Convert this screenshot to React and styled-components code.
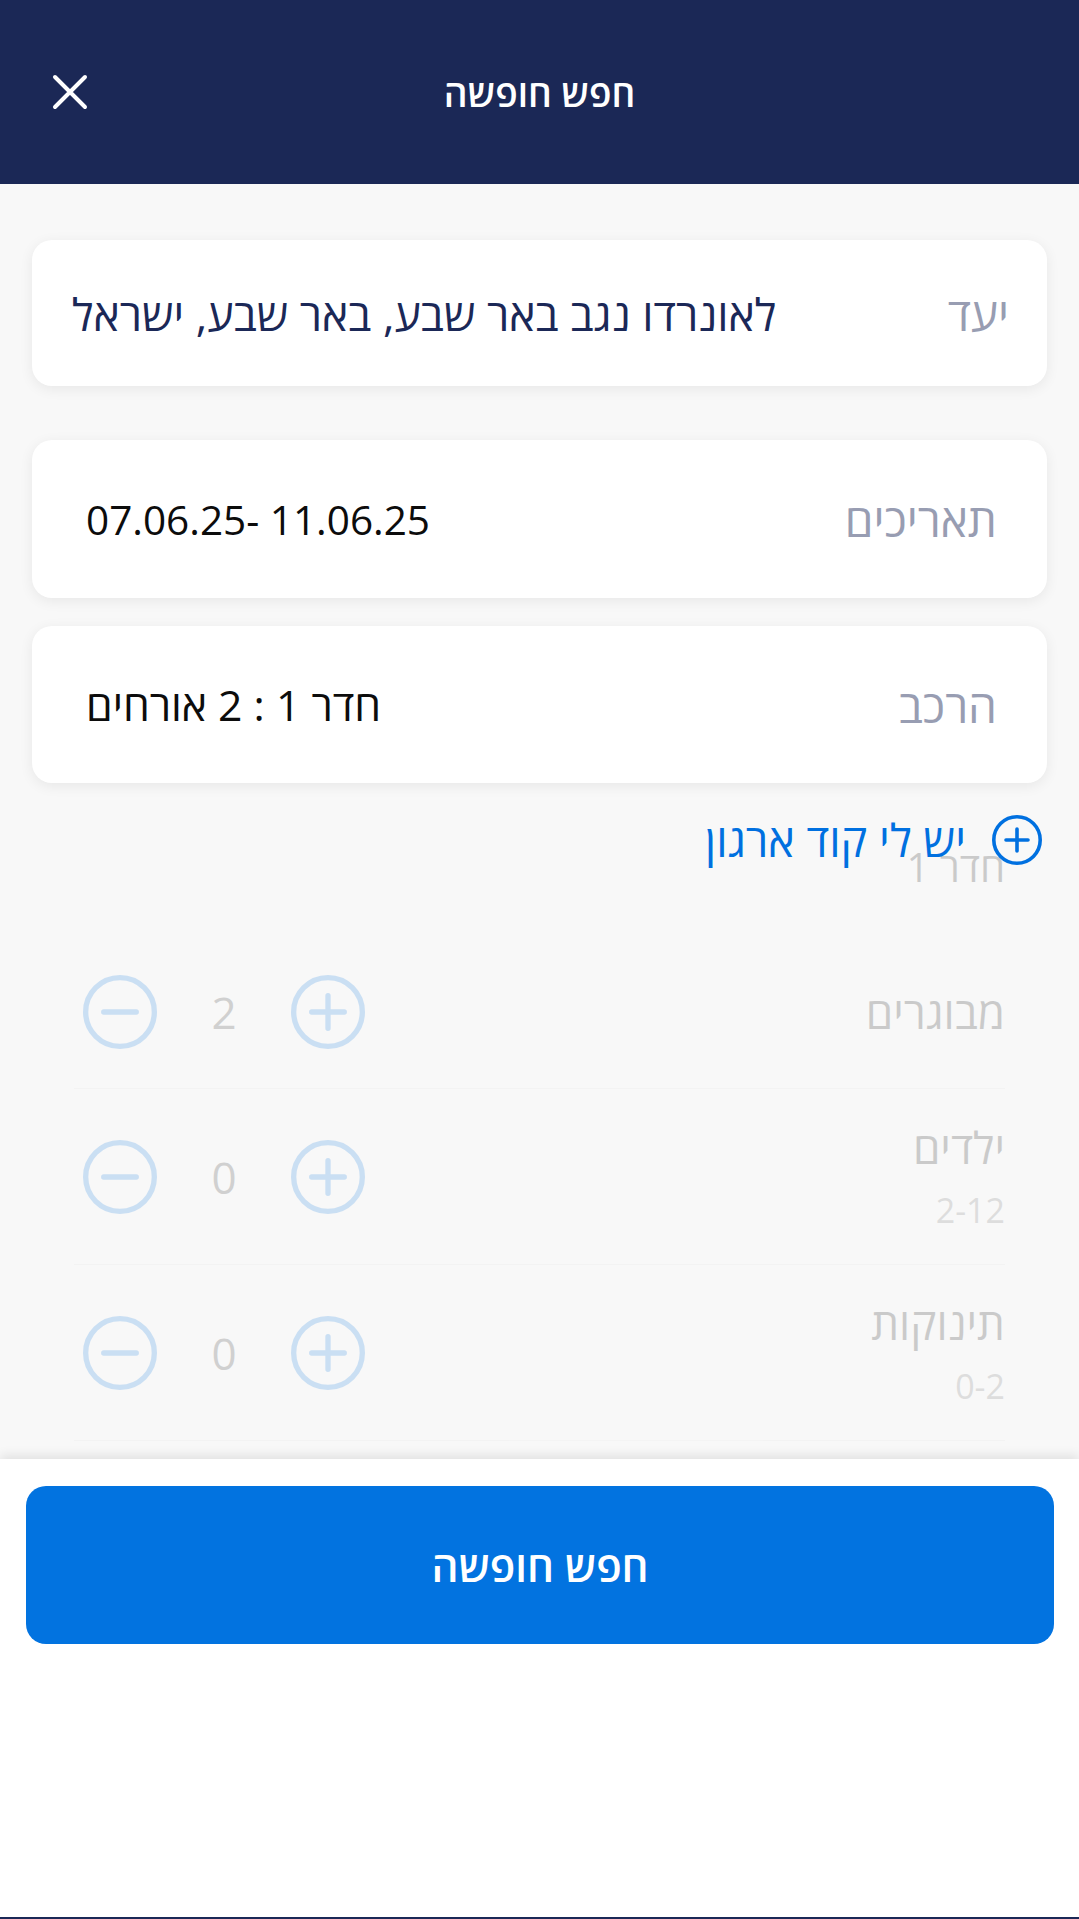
import React from "react";
import styled, { createGlobalStyle } from "styled-components";

const GlobalStyle = createGlobalStyle`
  html, body {
    margin: 0;
    padding: 0;
  }
  body {
    font-family: "Open Sans", "Liberation Sans", "DejaVu Sans", sans-serif;
    background: #fff;
  }
  * {
    box-sizing: border-box;
  }
`;

const CloseIcon = () => (
  <svg width="36" height="36" viewBox="0 0 36 36" fill="none">
    <path d="M3 3L33 33M33 3L3 33" stroke="#fff" strokeWidth="4" strokeLinecap="round" />
  </svg>
);

const CirclePlus = ({ size, color, stroke }) => (
  <svg width={size} height={size} viewBox="0 0 50 50" fill="none">
    <circle cx="25" cy="25" r={25 - stroke / 2} stroke={color} strokeWidth={stroke} />
    <path d="M25 14V36M14 25H36" stroke={color} strokeWidth={stroke} strokeLinecap="round" />
  </svg>
);

const CircleMinus = ({ size, color, stroke }) => (
  <svg width={size} height={size} viewBox="0 0 50 50" fill="none">
    <circle cx="25" cy="25" r={25 - stroke / 2} stroke={color} strokeWidth={stroke} />
    <path d="M14 25H36" stroke={color} strokeWidth={stroke} strokeLinecap="round" />
  </svg>
);

const guests = [
  { label: "מבוגרים", count: 2 },
  { label: "ילדים", sub: "2-12", count: 0 },
  { label: "תינוקות", sub: "0-2", count: 0 },
];

const App = () => {
  return (
    <Screen dir="rtl">
      <GlobalStyle />
      <Header>
        <span />
        <Title>חפש חופשה</Title>
        <CloseButton aria-label="סגור">
          <CloseIcon />
        </CloseButton>
      </Header>

      <Body>
        <Card $h={146} $pr={38} $pl={40}>
          <Label>יעד</Label>
          <Value $navy $size={44.5}>לאונרדו נגב באר שבע, באר שבע, ישראל</Value>
        </Card>
        <Card $h={158} $pr={50} $pl={54} $mt={54}>
          <Label>תאריכים</Label>
          <Value $size={40.5}>
            <bdi dir="ltr">07.06.25- 11.06.25</bdi>
          </Value>
        </Card>
        <Card $h={157} $pr={50} $pl={54} $mt={28}>
          <Label>הרכב</Label>
          <Value $size={42.7}>חדר 1 : 2 אורחים</Value>
        </Card>

        <OrgLink>
          <CirclePlus size={50} color="#0070e0" stroke={3.6} />
          <span>יש לי קוד ארגון</span>
        </OrgLink>

        <RoomPanel>
          <RoomTitle>חדר 1</RoomTitle>
          {guests.map((g) => (
            <GuestRow key={g.label} $tall={!!g.sub}>
              <GuestInfo>
                <GuestLabel>{g.label}</GuestLabel>
                {g.sub && <GuestSub>{g.sub}</GuestSub>}
              </GuestInfo>
              <Stepper>
                <CirclePlus size={74} color="#0073e0" stroke={3.6} />
                <Count>{g.count}</Count>
                <CircleMinus size={74} color="#0073e0" stroke={3.6} />
              </Stepper>
            </GuestRow>
          ))}
        </RoomPanel>
      </Body>

      <Footer>
        <SearchButton>חפש חופשה</SearchButton>
      </Footer>
    </Screen>
  );
};

const Screen = styled.div`
  direction: rtl;
  height: 1919px;
  display: flex;
  flex-direction: column;
  border-bottom: 2px solid #1b2856;
  background: #fff;
  overflow: hidden;
`;

const Header = styled.header`
  flex: 0 0 184px;
  background: #1b2856;
  display: grid;
  grid-template-columns: 1fr auto 1fr;
  align-items: center;
  padding: 0 52px;
`;

const Title = styled.h1`
  margin: 0;
  color: #fff;
  font-size: 37px;
  font-weight: 600;
`;

const CloseButton = styled.button`
  justify-self: end;
  background: none;
  border: 0;
  padding: 0;
  display: flex;
`;

const Body = styled.main`
  flex: 1;
  background: #f8f8f8;
  padding: 56px 32px 0;
  display: flex;
  flex-direction: column;
`;

const Card = styled.div`
  flex: 0 0 ${(p) => p.$h}px;
  margin-top: ${(p) => p.$mt || 0}px;
  background: #fff;
  border-radius: 20px;
  box-shadow: 0 3px 14px rgba(0, 0, 0, 0.07);
  display: flex;
  align-items: center;
  justify-content: space-between;
  padding: 0 ${(p) => p.$pr}px 0 ${(p) => p.$pl}px;
`;

const Label = styled.span`
  font-size: 46px;
  color: #989db2;
`;

const Value = styled.span`
  font-size: ${(p) => p.$size}px;
  color: ${(p) => (p.$navy ? "#1b2857" : "#0c0c0c")};
`;

const OrgLink = styled.div`
  position: relative;
  z-index: 1;
  margin-top: 32px;
  padding-right: 5px;
  display: flex;
  align-items: center;
  gap: 26px;
  color: #0070e0;
  font-size: 45px;
  font-weight: 500;
  line-height: 50px;
`;

const RoomPanel = styled.section`
  margin-top: -21px;
  padding: 0 42px;
  opacity: 0.18;
`;

const RoomTitle = styled.div`
  font-size: 40px;
  line-height: 46px;
  color: #000;
  margin-bottom: 46px;
`;

const GuestRow = styled.div`
  height: ${(p) => (p.$tall ? 176 : 153)}px;
  display: flex;
  align-items: center;
  justify-content: space-between;
  border-bottom: 1px solid #e2e2e2;
`;

const GuestInfo = styled.div`
  display: flex;
  flex-direction: column;
`;

const GuestLabel = styled.span`
  font-size: 44px;
  line-height: 50px;
  color: #000;
`;

const GuestSub = styled.span`
  margin-top: 16px;
  font-size: 34px;
  line-height: 44px;
  color: #666;
`;

const Stepper = styled.div`
  display: flex;
  align-items: center;
  gap: 47px;
  margin-left: 9px;
  svg {
    display: block;
  }
`;

const Count = styled.span`
  width: 40px;
  text-align: center;
  font-size: 44px;
  color: #222;
`;

const Footer = styled.footer`
  flex: 0 0 458px;
  position: relative;
  background: #fff;
  box-shadow: 0 -4px 10px rgba(0, 0, 0, 0.09);
  padding: 27px 25px 0 26px;
`;

const SearchButton = styled.button`
  width: 100%;
  height: 158px;
  border: 0;
  border-radius: 20px;
  background: #0273e0;
  color: #fff;
  font-family: inherit;
  font-size: 42px;
  font-weight: 600;
`;

export default App;
